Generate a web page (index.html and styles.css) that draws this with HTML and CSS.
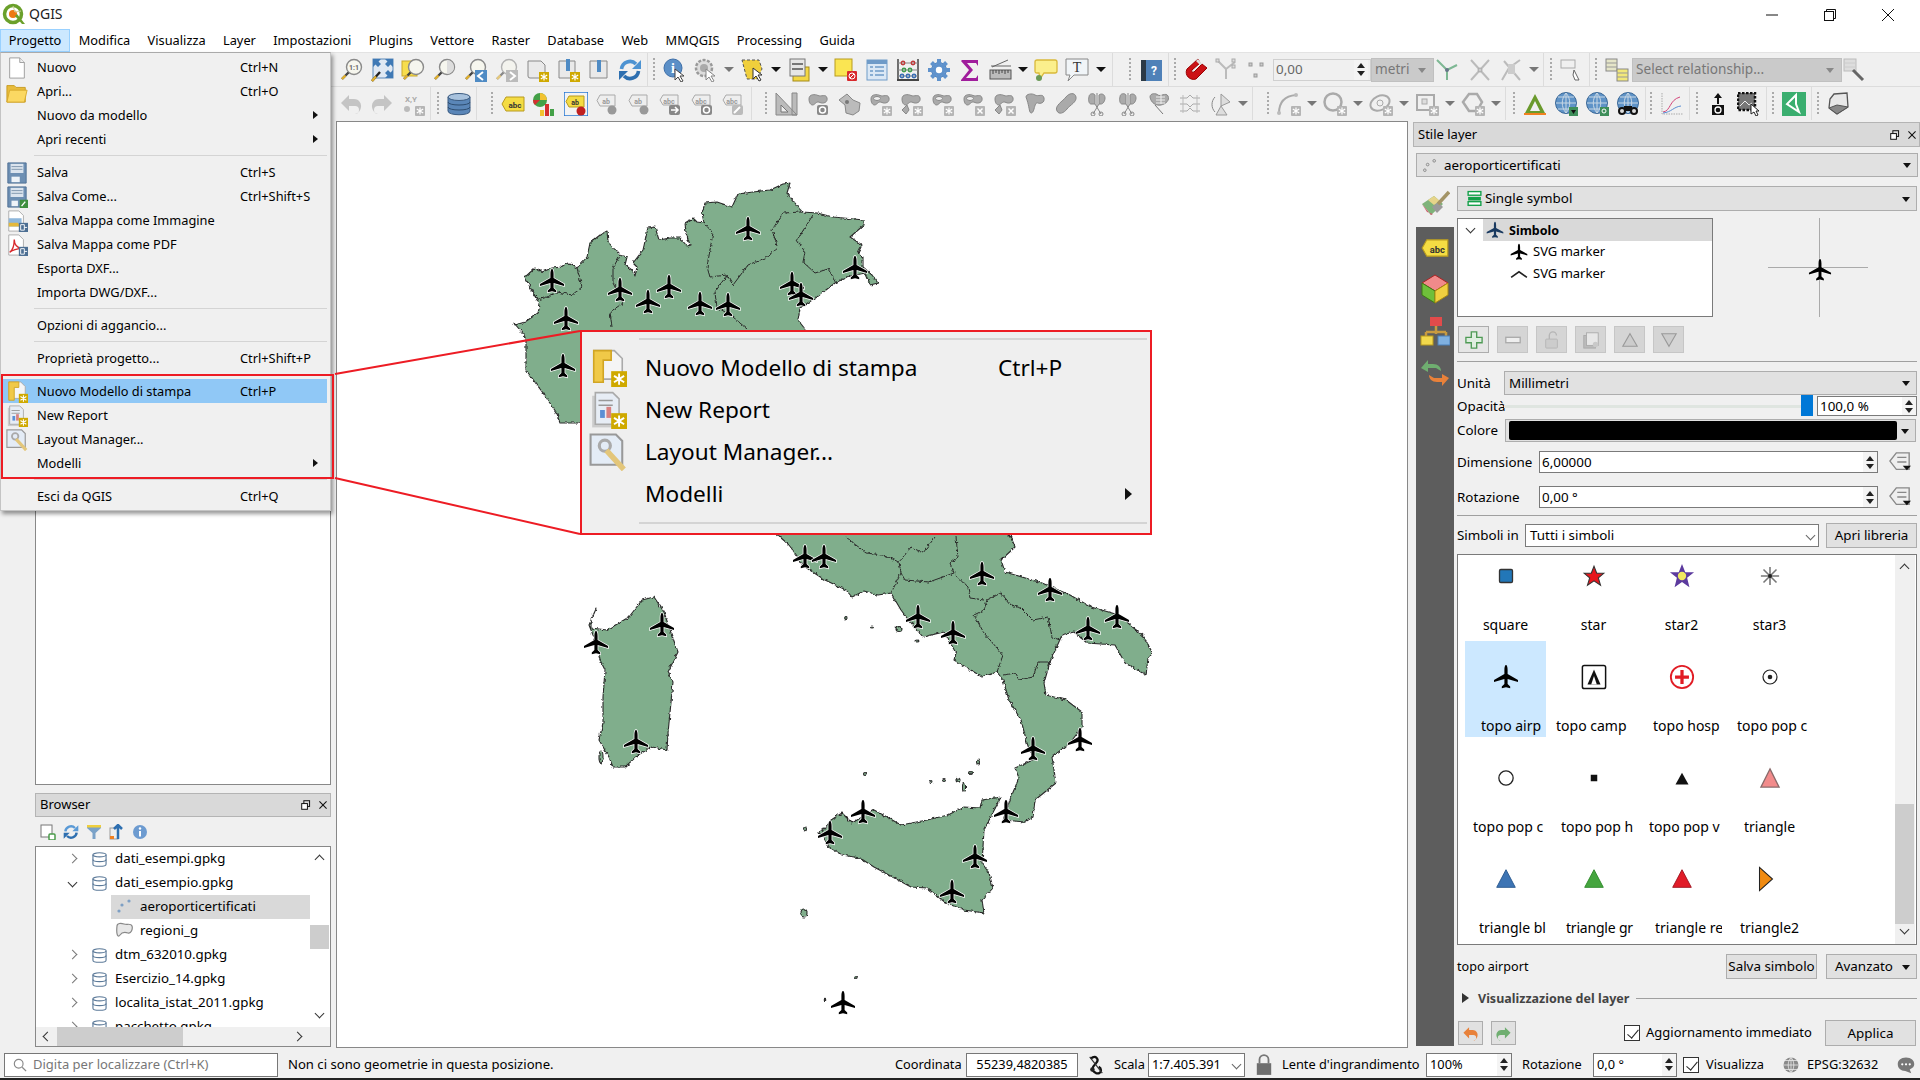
FILE: index.html
```html
<!DOCTYPE html>
<html lang="it">
<head>
<meta charset="utf-8">
<title>QGIS</title>
<link rel="stylesheet" href="styles.css">
</head>
<body>
<svg class="defs" width="0" height="0">
<defs>
<filter id="rough" filterUnits="userSpaceOnUse" x="336" y="121" width="1072" height="927"><feTurbulence type="fractalNoise" baseFrequency=".28" numOctaves="2" seed="4" result="n"/><feDisplacementMap in="SourceGraphic" in2="n" scale="3.600" xChannelSelector="R" yChannelSelector="G"/></filter>
<g id="mg"><circle cx="15" cy="9" r="7.5" fill="#f6f6ee" stroke="#8a8a8a" stroke-width="1.4"/><path d="M9.5 14.5 3 21" stroke="#444" stroke-width="2.4"/><path d="M6.5 17.5 3 21" stroke="#e0b030" stroke-width="2.4"/></g>
<g id="bs"><rect x="14" y="14" width="10" height="10" fill="#cfa900"/><path d="M19 15.5v7M15.8 17l6.4 4M15.8 21l6.4-4" stroke="#fff" stroke-width="1.2"/></g>
<g id="gs"><rect x="14" y="14" width="10" height="10" rx="1" fill="#b5b5b5"/><path d="M19 15.5v7M15.8 17l6.4 4M15.8 21l6.4-4" stroke="#fff" stroke-width="1.2"/></g>
<path id="blob" d="M3 7C3 2 9 2 12 3.5S20 1.500 21 6 17 12 14 10.500 10 11 8 12.500 3 12 3 7Z" fill="#aaa" stroke="#888"/>
<path id="plane" d="M0-12C1-12 1.600-10 1.600-7V-3L12 3V5L1.600 2V7L4.200 9.500V11.300L0 10.300-4.200 11.300V9.500L-1.600 7V2L-12 5V3L-1.600-3V-7C-1.600-10-1-12 0-12Z"/>
<symbol id="z11" viewBox="0 0 24 24"><use href="#mg"/><text x="15" y="12" class="it" fill="#666">1:1</text></symbol>
<symbol id="zfull" viewBox="0 0 24 24"><rect x="3" y="1" width="20" height="19" fill="#dfe8f3" stroke="#5b87b8"/><path d="M3 1h8L8.500 3.500 11 6 8 9 5.500 6.500 3 9ZM23 1h-8l2.500 2.500L15 6l3 3 2.500-2.500L23 9ZM23 20h-8l2.500-2.500L15 15l3-3 2.500 2.500L23 12Z" fill="#3f79b5"/><path d="M10 14 2 23" stroke="#222" stroke-width="2.400"/><path d="M6 18.500 2 23" stroke="#e0b030" stroke-width="2.400"/></symbol>
<symbol id="zlayer" viewBox="0 0 24 24"><rect x="1" y="3" width="15" height="15" fill="#f7dd4e" stroke="#c9a82a"/><use href="#mg"/></symbol>
<symbol id="zsel" viewBox="0 0 24 24"><use href="#mg"/><path d="M15 2a7 7 0 0 1 0 14z" fill="#ddd"/></symbol>
<symbol id="zlast" viewBox="0 0 24 24"><use href="#mg"/><rect x="12" y="12" width="12" height="12" fill="#4f8bc4"/><path d="M20 14l-5 4 5 4" fill="none" stroke="#fff" stroke-width="2"/></symbol>
<symbol id="znext" viewBox="0 0 24 24"><g opacity=".6"><use href="#mg"/></g><rect x="12" y="12" width="12" height="12" fill="#bbb"/><path d="M16 14l5 4-5 4" fill="none" stroke="#fff" stroke-width="2"/></symbol>
<symbol id="map1" viewBox="0 0 24 24"><path d="M3 3h13l4 4v13H5q-2 0-2-2Z" fill="#e9e9e9" stroke="#888"/><use href="#bs"/></symbol>
<symbol id="map2" viewBox="0 0 24 24"><path d="M3 3h16v17H3Z" fill="#e9e9e9" stroke="#888"/><rect x="10" y="1" width="4" height="12" fill="#4f8bc4"/><use href="#bs"/></symbol>
<symbol id="map3" viewBox="0 0 24 24"><path d="M3 3h17v17H3Z" fill="#e9e9e9" stroke="#888"/><rect x="10" y="2" width="4" height="12" fill="#4f8bc4"/></symbol>
<symbol id="refresh" viewBox="0 0 24 24"><path d="M3.500 11A8.500 8.500 0 0 1 18 6" fill="none" stroke="#4d93d2" stroke-width="3.600"/><path d="M23 2v9h-9Z" fill="#4d93d2"/><path d="M20.500 13A8.500 8.500 0 0 1 6 18" fill="none" stroke="#2d6fb0" stroke-width="3.600"/><path d="M1 22v-9h9Z" fill="#2d6fb0"/></symbol>
<symbol id="ident" viewBox="0 0 24 24"><circle cx="10" cy="10" r="9" fill="#5b8fc7" stroke="#3e6fa8"/><text x="10" y="15" class="ii" fill="#fff">i</text><path d="M12 11v11l3-3 3 5 2-1-3-5h4Z" fill="#fff" stroke="#444"/></symbol>
<symbol id="run" viewBox="0 0 24 24"><circle cx="10" cy="10" r="8" fill="#ddd" stroke="#999" stroke-width="2.500" stroke-dasharray="3 1.500"/><circle cx="10" cy="10" r="4" fill="#aaa"/><path d="M12 11v11l3-3 3 5 2-1-3-5h4Z" fill="#fff" stroke="#888"/></symbol>
<symbol id="sel" viewBox="0 0 24 24"><path d="M1 2h17l3 9-5 10H6Z" fill="#f0cf3c" stroke="#555" stroke-dasharray="3 2"/><path d="M12 10v11l3-3 3 5 2-1-3-5h4Z" fill="#fff" stroke="#333"/></symbol>
<symbol id="attr" viewBox="0 0 24 24"><rect x="5" y="9" width="16" height="14" fill="#f3d743" stroke="#a38a1a"/><rect x="2" y="1" width="15" height="17" fill="#e6e6e6" stroke="#777"/><path d="M4 6h11M4 11h11" stroke="#777" stroke-width="2"/></symbol>
<symbol id="desel" viewBox="0 0 24 24"><rect x="1" y="1" width="17" height="17" fill="#fae552" stroke="#b89b1e"/><rect x="13" y="13" width="10" height="10" rx="1" fill="#d8282c"/><circle cx="18" cy="18" r="3" fill="none" stroke="#fff"/><path d="M16 20l4-4" stroke="#fff"/></symbol>
<symbol id="table" viewBox="0 0 24 24"><rect x="2" y="2" width="20" height="20" fill="#dbe8f5" stroke="#6f9bc8"/><rect x="2" y="2" width="20" height="4" fill="#6f9bc8"/><path d="M5 9h3M10 9h9M5 13h3M10 13h9M5 17h3M10 17h9" stroke="#6f9bc8" stroke-width="1.500"/></symbol>
<symbol id="abacus" viewBox="0 0 24 24"><path d="M2 1v21M22 1v21" stroke="#444" stroke-width="1.500"/><path d="M1 22h22" stroke="#444" stroke-width="2"/><path d="M2 5h20M2 12h20M2 18h20" stroke="#888"/><g fill="none" stroke-width="1.500"><g stroke="#c03a3a"><circle cx="7" cy="5" r="1.700"/><circle cx="17" cy="5" r="1.700"/></g><g stroke="#3f9a4c"><circle cx="8" cy="12" r="1.700"/><circle cx="14" cy="12" r="1.700"/></g><g stroke="#3a6fb5"><circle cx="6" cy="18" r="1.700"/><circle cx="12" cy="18" r="1.700"/><circle cx="18" cy="18" r="1.700"/></g></g></symbol>
<symbol id="gear" viewBox="0 0 24 24"><circle cx="12" cy="12" r="7.500" fill="#6f9fd4" stroke="#4d7fb8"/><path d="M12 1v22M1 12h22M4.500 4.500l15 15M19.500 4.500l-15 15" stroke="#5f92cc" stroke-width="4"/><circle cx="12" cy="12" r="3.200" fill="#fff"/></symbol>
<symbol id="sigma" viewBox="0 0 24 24"><path d="M4 2h16v6l-2-3H9l6 7-7 8h10l2-3v6H3v-1l8-10L3 3Z" fill="#a01d9c"/></symbol>
<symbol id="rul" viewBox="0 0 24 24"><rect x="1" y="12" width="21" height="9" fill="#bbb" stroke="#555"/><path d="M4 12v4M7 12v3M10 12v4M13 12v3M16 12v4M19 12v3" stroke="#444"/><path d="M3 9l16-7M2 8h20" stroke="#666" fill="none"/></symbol>
<symbol id="tip" viewBox="0 0 24 24"><path d="M3 2h18q2 0 2 2v9q0 2-2 2H10l-4 6-1-6H3q-2 0-2-2V4q0-2 2-2Z" fill="#fbef8c" stroke="#d9b93a" stroke-width="1.300"/><circle cx="5" cy="20" r="3" fill="#6b9a58"/></symbol>
<symbol id="tann" viewBox="0 0 24 24"><path d="M1 1h22v16H9l-6 6 2-6H1Z" fill="#f1f5f8" stroke="#888"/><text x="12" y="14" class="iT" fill="#333">T</text></symbol>
<symbol id="help" viewBox="0 0 24 24"><rect x="2" y="2" width="21" height="21" fill="#4f81b8"/><rect x="2" y="2" width="5" height="21" fill="#2c3a47"/><text x="15" y="17" class="iq" fill="#fff">?</text></symbol>
<symbol id="magnet" viewBox="0 0 24 24"><path d="M14 1 3 11c-3 6 3 12 9 10L23 10l-5-4-8 8c-2 1-3-1-2-2l8-7Z" fill="#cc1216" stroke="#900"/><path d="M14 1l4 5 -2 1-4-4ZM23 10l-5-4" fill="#ddd"/></symbol>
<symbol id="topo" viewBox="0 0 24 24"><path d="M3 3l8 8v10M11 11l9-7" stroke="#bbb" stroke-width="2" fill="none"/><g fill="#ddd" stroke="#aaa"><rect x="1" y="1" width="3" height="3"/><rect x="17" y="1" width="3" height="3"/><rect x="17" y="7" width="3" height="3"/></g></symbol>
<symbol id="dots" viewBox="0 0 24 24"><g fill="#ccc" stroke="#999"><rect x="3" y="5" width="3" height="3"/><rect x="14" y="5" width="3" height="3"/><rect x="8" y="16" width="3" height="3"/></g></symbol>
<symbol id="vtx" viewBox="0 0 24 24"><path d="M2 2l10 10v10M12 12l10-5" stroke="#7eb894" stroke-width="2" fill="none"/><circle cx="12" cy="12" r="2" fill="#678"/></symbol>
<symbol id="cross" viewBox="0 0 24 24"><path d="M3 2l18 20M21 2 3 22" stroke="#bbb" stroke-width="2"/><circle cx="12" cy="12" r="2" fill="#ccc" stroke="#aaa"/></symbol>
<symbol id="cross2" viewBox="0 0 24 24"><path d="M3 22 10 10l11-8M5 3l16 19" stroke="#bbb" stroke-width="2" fill="none"/><path d="M9 6h7v10H9Z" fill="#ccc"/></symbol>
<symbol id="hand" viewBox="0 0 24 24"><rect x="1" y="2" width="14" height="8" fill="none" stroke="#aaa"/><path d="M14 12l3 6 2 4h-4l-2-5Z" fill="#fff" stroke="#666"/></symbol>
<symbol id="rel" viewBox="0 0 24 24"><rect x="1" y="1" width="11" height="12" fill="#e5e5c8" stroke="#888"/><path d="M1 5h11M1 9h11" stroke="#999"/><rect x="12" y="11" width="11" height="12" fill="#f2e87a" stroke="#888"/><path d="M12 15h11M12 19h11" stroke="#999"/></symbol>
<symbol id="relw" viewBox="0 0 24 24"><rect x="1" y="1" width="12" height="12" fill="#ddd" stroke="#bbb"/><path d="M1 5h12M1 9h12" stroke="#ccc"/><path d="M10 12l10 10" stroke="#666" stroke-width="3"/></symbol>
<symbol id="undo" viewBox="0 0 24 24"><path d="M10 3 2 11l8 8v-5h6a4 4 0 0 1 0 8v0a8 8 0 0 0 3-14q-2-1-4-1h-5Z" fill="#c4c4c4"/></symbol>
<symbol id="redo" viewBox="0 0 24 24"><path d="M14 3l8 8-8 8v-5H8a4 4 0 0 0 0 8v0A8 8 0 0 1 5 8q2-1 4-1h5Z" fill="#c4c4c4"/></symbol>
<symbol id="xy" viewBox="0 0 24 24"><text x="10" y="10" class="ix" fill="#aaa">X,Y</text><circle cx="6" cy="17" r="3" fill="#bbb"/><use href="#gs"/></symbol>
<symbol id="db" viewBox="0 0 24 24"><path d="M1 5v14c0 5 22 5 22 0V5Z" fill="#5a86b8" stroke="#3a5a80"/><ellipse cx="12" cy="5" rx="11" ry="3.500" fill="#a8c2dd" stroke="#3a5a80"/><path d="M1 10c0 4 22 4 22 0M1 15c0 4 22 4 22 0" fill="none" stroke="#2e4d70"/></symbol>
<symbol id="abc" viewBox="0 0 24 24"><path d="M5 5h18v14H5L1 12Z" fill="#f4dc43" stroke="#b89a1f"/><text x="14" y="16" class="ia" fill="#333">abc</text></symbol>
<symbol id="pie" viewBox="0 0 24 24"><circle cx="8" cy="8" r="7" fill="#43a047"/><path d="M8 8V1a7 7 0 0 1 7 7Z" fill="#f2c230"/><path d="M8 8 3 13a7 7 0 0 1-2-5Z" fill="#d32f2f"/><rect x="8" y="18" width="4" height="6" fill="#f2c230"/><rect x="13" y="12" width="4" height="12" fill="#d32f2f"/><rect x="18" y="17" width="4" height="7" fill="#43a047"/></symbol>
<symbol id="abp" viewBox="0 0 24 24"><rect x="0" y="0" width="24" height="24" fill="#fff" fill-opacity=".2" stroke="#1c6fd0" stroke-width="1.400"/><path d="M5 4h15v11H5L2 9.500Z" fill="#f4dc43" stroke="#b89a1f"/><text x="11" y="13" class="ib" fill="#333">ab</text><circle cx="17" cy="19" r="4.500" fill="#c02020"/></symbol>
<symbol id="abg" viewBox="0 0 24 24"><path d="M5 3h15v11H5L2 8.500Z" fill="#eee" stroke="#aaa"/><text x="11" y="12" class="ib" fill="#999">ab</text><circle cx="17" cy="18" r="4.500" fill="#999"/></symbol>
<symbol id="abe" viewBox="0 0 24 24"><path d="M5 3h15v10H5L2 8Z" fill="#eee" stroke="#aaa"/><text x="11" y="11.500" class="ib" fill="#999">abc</text><rect x="11" y="13" width="11" height="10" rx="2" fill="#888"/><path d="M13 18h7M17 15l3 3-3 3" stroke="#fff" fill="none" stroke-width="1.500"/></symbol>
<symbol id="abr" viewBox="0 0 24 24"><path d="M5 3h15v10H5L2 8Z" fill="#eee" stroke="#aaa"/><text x="11" y="11.500" class="ib" fill="#999">abc</text><rect x="11" y="13" width="11" height="10" rx="2" fill="#888"/><circle cx="16.500" cy="18" r="3" fill="none" stroke="#fff" stroke-width="1.500"/></symbol>
<symbol id="abw" viewBox="0 0 24 24"><path d="M5 3h15v10H5L2 8Z" fill="#eee" stroke="#aaa"/><text x="11" y="11.500" class="ib" fill="#999">abc</text><rect x="11" y="13" width="11" height="10" rx="2" fill="#bbb"/><path d="M13 21l6-6" stroke="#fff" stroke-width="2"/></symbol>
<symbol id="sq" viewBox="0 0 24 24"><path d="M1 1 22 23H1ZM22 1v22h-5V1Z" fill="#bbb" stroke="#888"/><path d="M6 13l7 7H6Z" fill="#eee" stroke="#777"/></symbol>
<symbol id="bl1" viewBox="0 0 24 24"><use href="#blob"/><rect x="11" y="13" width="11" height="10" rx="2" fill="#888"/><circle cx="16.500" cy="18" r="3" fill="none" stroke="#fff" stroke-width="1.500"/></symbol>
<symbol id="bl2" viewBox="0 0 24 24"><path d="M2 8 10 2l6 6 7 3-1 8-6 4-7-2-1-8Z" fill="#bbb" stroke="#888"/><circle cx="10" cy="10" r="2" fill="#777"/></symbol>
<symbol id="bl3" viewBox="0 0 24 24"><use href="#blob"/><ellipse cx="9" cy="6.500" rx="3.500" ry="2" fill="#eee" stroke="#888"/><use href="#gs"/></symbol>
<symbol id="bl4" viewBox="0 0 24 24"><use href="#blob"/><path d="M3 18l5-5 2 5-3 4Z" fill="#aaa" stroke="#888"/><use href="#gs"/></symbol>
<symbol id="bl5" viewBox="0 0 24 24"><use href="#blob"/><ellipse cx="9" cy="6.500" rx="3.500" ry="2" fill="#eee" stroke="#888"/><rect x="14" y="14" width="10" height="10" rx="1" fill="#b5b5b5"/><path d="M16.500 16.500l5 5M21.500 16.500l-5 5" stroke="#fff" stroke-width="1.500"/></symbol>
<symbol id="bl6" viewBox="0 0 24 24"><use href="#blob"/><path d="M3 18l5-5 2 5-3 4Z" fill="#aaa" stroke="#888"/><rect x="14" y="14" width="10" height="10" rx="1" fill="#b5b5b5"/><path d="M16.500 16.500l5 5M21.500 16.500l-5 5" stroke="#fff" stroke-width="1.500"/></symbol>
<symbol id="bl7" viewBox="0 0 24 24"><path d="M3 5C3 2 9 1 12 3s8-2 9 3-4 6-6 5-3 2-4 6-3 5-4 3-1-7-4-15Z" fill="#aaa" stroke="#888"/></symbol>
<symbol id="bl8" viewBox="0 0 24 24"><path d="M3 19C0 14 9 9 12 5s9-5 10 0-6 8-9 12-8 6-10 2Z" fill="#aaa" stroke="#888"/></symbol>
<symbol id="cut" viewBox="0 0 24 24"><path d="M4 5C4 1 9 1 10 3V12H6C4 12 3 8 4 5ZM14 3c2-2 6-1 6 3 0 3-2 6-4 6h-2Z" fill="#aaa" stroke="#888"/><path d="M12 1v13M8 22l6-10M16 22l-6-10" stroke="#888"/><circle cx="8" cy="22" r="2" fill="none" stroke="#888"/><circle cx="16" cy="22" r="2" fill="none" stroke="#888"/></symbol>
<symbol id="cut2" viewBox="0 0 24 24"><path d="M3 5c0-4 6-4 8-2s8-3 10 1-2 8-7 9-10-2-11-8Z" fill="#aaa" stroke="#888"/><path d="M14 2v10M9 5h9M9 8h9M9 11h9" stroke="#eee"/><path d="M8 13 16 22" stroke="#777"/></symbol>
<symbol id="offs" viewBox="0 0 24 24"><path d="M2 6h7l3-3 3 3h7M2 12h7l3 3 3-3h7M2 19h7l3-3 3 3h7" fill="none" stroke="#aaa"/><path d="M5 3v18M19 3v18" stroke="#bbb"/></symbol>
<symbol id="rot" viewBox="0 0 24 24"><path d="M6 5C2 9 2 16 6 20" fill="none" stroke="#888"/><path d="M12 2 21 10 12 14ZM12 14l6 9H7Z" fill="#ddd" stroke="#999"/></symbol>
<symbol id="crv" viewBox="0 0 24 24"><path d="M2 21C2 10 8 4 19 3" fill="none" stroke="#aaa" stroke-width="2"/><circle cx="2" cy="21" r="2" fill="#bbb"/><circle cx="19" cy="3" r="2" fill="#bbb"/><use href="#gs"/></symbol>
<symbol id="crc" viewBox="0 0 24 24"><circle cx="10" cy="10" r="8.500" fill="none" stroke="#aaa" stroke-width="2.500"/><use href="#gs"/></symbol>
<symbol id="ell" viewBox="0 0 24 24"><ellipse cx="11" cy="11" rx="10" ry="7" fill="none" stroke="#aaa" stroke-width="2" transform="rotate(-25 11 11)"/><circle cx="11" cy="11" r="3" fill="none" stroke="#aaa"/><use href="#gs"/></symbol>
<symbol id="rct" viewBox="0 0 24 24"><rect x="2" y="3" width="17" height="15" fill="none" stroke="#aaa" stroke-width="2"/><rect x="7" y="7" width="5" height="5" fill="#ddd" stroke="#aaa"/><use href="#gs"/></symbol>
<symbol id="pgn" viewBox="0 0 24 24"><path d="M8 2h8l5 8-5 9H8L2 10Z" fill="none" stroke="#aaa" stroke-width="2.500"/><use href="#gs"/></symbol>
<symbol id="qgsa" viewBox="0 0 24 24"><path d="M12 2 22 21H2ZM12 9 7 19h10Z" fill="#6a9a2c"/><rect x="1" y="21" width="22" height="2" fill="#f08020"/></symbol>
<symbol id="glb" viewBox="0 0 24 24"><circle cx="12" cy="11" r="10.500" fill="#5f93c7" stroke="#3a6897"/><path d="M12 1v20M2 11h20M4 5h16M4 17h16M12 1C7 7 7 15 12 21M12 1c5 6 5 14 0 20" fill="none" stroke="#c9d8e5"/></symbol>
<symbol id="glb1" viewBox="0 0 24 24"><use href="#glb"/><rect x="15" y="15" width="9" height="9" fill="#3e8e5a"/><path d="M17 18h5l-2.500 4Z" fill="#111"/></symbol>
<symbol id="glb2" viewBox="0 0 24 24"><use href="#glb"/><rect x="15" y="15" width="9" height="9" fill="#3e8e5a"/><circle cx="19" cy="19" r="2" fill="none" stroke="#fff"/></symbol>
<symbol id="glb3" viewBox="0 0 24 24"><use href="#glb"/><circle cx="6" cy="19" r="4" fill="#111"/><circle cx="18" cy="19" r="4" fill="#111"/><rect x="8" y="14" width="8" height="5" fill="#111"/><circle cx="6" cy="19" r="2" fill="#ddd"/><circle cx="18" cy="19" r="2" fill="#ddd"/></symbol>
<symbol id="chart" viewBox="0 0 24 24"><path d="M2 1v21h21" fill="none" stroke="#aaa" stroke-dasharray="1.500 1"/><path d="M3 20c8-1 6-12 17-15" fill="none" stroke="#d4457a"/><path d="M3 21c9-1 10-6 18-7" fill="none" stroke="#5b8fd4"/></symbol>
<symbol id="cam" viewBox="0 0 24 24"><path d="M12 1l-4 5h3v6h2V6h3Z" fill="#111"/><rect x="6" y="13" width="12" height="10" fill="#111"/><circle cx="12" cy="18" r="3" fill="none" stroke="#fff" stroke-width="1.300"/></symbol>
<symbol id="pic" viewBox="0 0 24 24"><rect x="1" y="1" width="17" height="17" fill="#777" stroke="#111" stroke-width="2.500" stroke-dasharray="2.500 1.500"/><path d="M3 14l5-5 4 4 3-2" stroke="#eee" fill="none"/><path d="M14 12v10l3-2 2 4 2-1-2-4h3Z" fill="#fff" stroke="#222"/></symbol>
<symbol id="grn" viewBox="0 0 24 24"><rect width="24" height="24" fill="#3aae6f"/><path d="M14 3 5 12l12 8-3-8Z" fill="none" stroke="#fff" stroke-width="2"/></symbol>
<symbol id="d3" viewBox="0 0 24 24"><path d="M7 2l13-1 1 14-11 7L2 16l1-9Z" fill="#e8e8e8" stroke="#555" stroke-width="1.300"/><path d="M2 16l8-3 11 2-11 7Z" fill="#888" stroke="#555"/></symbol>
<symbol id="m-new" viewBox="0 0 24 24"><path d="M4 1h11l5 5v17H4Z" fill="#fff" stroke="#999"/><path d="M15 1v5h5" fill="#eee" stroke="#999"/></symbol>
<symbol id="m-open" viewBox="0 0 24 24"><path d="M1 5h8l2 2h10v16H1Z" fill="#e8bc3c" stroke="#c79a20"/><path d="M1 23 4 10h19l-3 13Z" fill="#fbd862" stroke="#d6a92c"/></symbol>
<symbol id="m-save" viewBox="0 0 24 24"><path d="M2 1h20v22H2Z" fill="#6d8fb3" stroke="#4d6f93"/><rect x="5" y="2" width="14" height="10" fill="#dbe4ee"/><path d="M6 5h12M6 8h12" stroke="#7c93ab"/><rect x="6" y="16" width="9" height="6" fill="#eef3f8"/></symbol>
<symbol id="m-saveas" viewBox="0 0 24 24"><path d="M2 1h20v22H2Z" fill="#6d8fb3" stroke="#4d6f93"/><rect x="5" y="2" width="14" height="10" fill="#dbe4ee"/><path d="M6 5h12M6 8h12" stroke="#7c93ab"/><rect x="6" y="16" width="7" height="6" fill="#eef3f8"/><rect x="15" y="15" width="9" height="9" fill="#3f8f3f"/><path d="M17 22l4-5" stroke="#fff" stroke-width="1.500"/></symbol>
<symbol id="m-img" viewBox="0 0 24 24"><path d="M3 1h11l5 5v17H3Z" fill="#fff" stroke="#aaa"/><rect x="3" y="9" width="14" height="9" fill="#8eb7db"/><path d="M3 14h10l3 4H3Z" fill="#e4b93c"/><rect x="14" y="14" width="10" height="10" fill="#4d6f93"/><path d="M16 16h4v6h-4ZM20 19h3" stroke="#fff" fill="none"/></symbol>
<symbol id="m-pdf" viewBox="0 0 24 24"><path d="M3 1h11l5 5v17H3Z" fill="#fff" stroke="#aaa"/><path d="M4 20C8 17 9 10 9 6c0 6 4 9 8 10-4 0-8 0-13 4Z" fill="none" stroke="#d8282c" stroke-width="1.500"/><rect x="14" y="14" width="10" height="10" fill="#4d6f93"/><path d="M16 16h4v6h-4ZM20 19h3" stroke="#fff" fill="none"/></symbol>
<symbol id="m-lay" viewBox="0 0 24 24"><path d="M3 1h13l5 5v13H3Z" fill="#f5f5f5" stroke="#aaa"/><path d="M3 1h11v6H9v14H3Z" fill="#f0c948" stroke="#d1a524"/><use href="#bs"/></symbol>
<symbol id="m-rep" viewBox="0 0 24 24"><rect x="2" y="3" width="16" height="20" fill="#ccc"/><path d="M4 1h11l4 4v16H4Z" fill="#e7edf5" stroke="#aaa"/><path d="M6 6h9M6 9h9" stroke="#999"/><rect x="7" y="12" width="3" height="5" fill="#5b8fd4"/><rect x="11" y="10" width="3" height="7" fill="#d98080"/><use href="#bs"/></symbol>
<symbol id="m-mgr" viewBox="0 0 24 24"><path d="M1 1h16l4 4v15H1Z" fill="#e4ecf6" stroke="#999" stroke-width="1.300"/><circle cx="10" cy="8" r="3.500" fill="none" stroke="#aaa" stroke-width="2"/><path d="M11 11l11 12" stroke="#e3c67a" stroke-width="3.500"/></symbol>
<symbol id="r-db" viewBox="0 0 16 16"><path d="M1 3v10c0 3 14 3 14 0V3" fill="#fff" stroke="#5c7a99" stroke-width="1.200"/><ellipse cx="8" cy="3" rx="7" ry="2.200" fill="#fff" stroke="#5c7a99" stroke-width="1.200"/><path d="M1 8c0 3 14 3 14 0" fill="none" stroke="#5c7a99" stroke-width="1.200"/></symbol>
<symbol id="r-pts" viewBox="0 0 16 16"><g fill="#7d9fc4"><circle cx="3" cy="13" r="1.600"/><circle cx="6" cy="7" r="1.600"/><circle cx="13" cy="3" r="1.600"/></g></symbol>
<symbol id="r-pts2" viewBox="0 0 16 16"><g fill="none" stroke="#888"><circle cx="3" cy="13" r="1.400"/><circle cx="6" cy="7" r="1.400"/><circle cx="13" cy="3" r="1.400"/></g></symbol>
<symbol id="r-pg" viewBox="0 0 18 16"><path d="M2 4C2 1 6 1 9 2s7-1 8 2-1 8-4 7-6-1-8 2-4 0-3-9Z" fill="#e7e7e7" stroke="#888" stroke-width="1.200"/></symbol>
<symbol id="b-new" viewBox="0 0 16 16"><rect x="1" y="1" width="11" height="12" fill="#fff" stroke="#777"/><rect x="9" y="10" width="6" height="6" rx="1" fill="#fff" stroke="#4a9b4a" stroke-width="1.500"/></symbol>
<symbol id="b-ref" viewBox="0 0 24 24"><path d="M3.500 11A8.500 8.500 0 0 1 18 6" fill="none" stroke="#5a9ad6" stroke-width="3.600"/><path d="M23 2v9h-9Z" fill="#5a9ad6"/><path d="M20.500 13A8.500 8.500 0 0 1 6 18" fill="none" stroke="#2d6fb0" stroke-width="3.600"/><path d="M1 22v-9h9Z" fill="#2d6fb0"/></symbol>
<symbol id="b-fil" viewBox="0 0 16 16"><path d="M1 1h14v3L9.500 9v6H6.500V9L1 4Z" fill="#7aa2c8"/><rect x="1" y="1" width="14" height="2.500" fill="#f0cf3c"/></symbol>
<symbol id="b-col" viewBox="0 0 16 16"><rect x="1" y="4" width="8" height="11" fill="#eee" stroke="#999"/><rect x="1" y="12" width="4" height="3" fill="#f08020"/><path d="M9 1v14M5 5l4-4 4 4" stroke="#2d6fb0" stroke-width="2.500" fill="none"/></symbol>
<symbol id="b-inf" viewBox="0 0 16 16"><circle cx="8" cy="8" r="7" fill="#6d9bd0"/><rect x="7" y="7" width="2" height="5.500" fill="#fff"/><circle cx="8" cy="4.500" r="1.200" fill="#fff"/></symbol>
<symbol id="lgo" viewBox="0 0 24 24"><circle cx="11" cy="11" r="8.500" fill="#fff" stroke="#6aa02b" stroke-width="3.500"/><circle cx="11" cy="11" r="4" fill="#ee7913"/><path d="M13 13l7 8h3l-8-10Z" fill="#6aa02b"/><path d="M11 3l2 6 6-1" fill="none" stroke="#d0d0a0"/></symbol>
<symbol id="dtop" viewBox="0 0 14 14"><rect x="4" y="1" width="8" height="8" fill="none" stroke="#111" stroke-width="1.400"/><rect x="1" y="5" width="8" height="8" fill="#fff" stroke="#111" stroke-width="1.400"/></symbol>
<symbol id="dx" viewBox="0 0 14 14"><path d="M2 2l10 10M12 2 2 12" stroke="#111" stroke-width="1.500"/></symbol>
<symbol id="ddef" viewBox="0 0 24 24"><path d="M8 2h14v18H8L1 11Z" fill="#eee" stroke="#888" stroke-width="1.500"/><path d="M9 7h10M9 12h10" stroke="#888" stroke-width="1.500"/><path d="M15 16h9l-4.500 5Z" fill="#111"/></symbol>
<symbol id="brush" viewBox="0 0 30 30"><path d="M2 14 14 6l9 8-12 11Z" fill="#7fb37a"/><path d="M2 14l5 8 6 2-2 1Z" fill="#cc5a6a"/><path d="M8 10l6-4 6 5-6 4Z" fill="#e6d48a"/><path d="M12 17 18 12l5 5-6 6Z" fill="#9a9a9a"/><path d="M18 14 29 2" stroke="#a39467" stroke-width="3.500"/></symbol>
<symbol id="cube" viewBox="0 0 30 30"><path d="M15 1 28 9 15 17 2 9Z" fill="#f08a8a" stroke="#a22"/><path d="M2 9 15 17V29L2 21Z" fill="#6fbf3a" stroke="#3d7a15"/><path d="M28 9 15 17V29L28 21Z" fill="#f0d040" stroke="#a88a10"/></symbol>
<symbol id="tree" viewBox="0 0 30 30"><rect x="10" y="1" width="12" height="9" fill="#e24b4b"/><path d="M16 10v8M6 16h20M6 16v4M26 16v4" stroke="#c89a40" stroke-width="2.500" fill="none"/><rect x="1" y="20" width="12" height="9" fill="#f2d84c" stroke="#b89a1f"/><rect x="18" y="20" width="12" height="9" fill="#7fb0e0" stroke="#4a7eb8"/></symbol>
<symbol id="hist" viewBox="0 0 30 30"><path d="M1 10 8 2v4h5c5 0 8 3 8 7l-5-3H8v4Z" fill="#6fae70"/><path d="M29 20 22 28v-4h-5c-5 0-8-3-8-7l5 3h8v-4Z" fill="#e8813a"/></symbol>
<symbol id="rr" viewBox="0 0 16 16"><rect x="2" y="1.500" width="12" height="3.400" fill="#fff" stroke="#14a04a" stroke-width="1.300"/><rect x="2" y="6.500" width="12" height="3.400" fill="#14a04a"/><rect x="2" y="11" width="12" height="3.400" fill="#fff" stroke="#14a04a" stroke-width="1.300"/></symbol>
<symbol id="plus" viewBox="0 0 20 20"><path d="M7 1h6v6h6v6h-6v6H7v-6H1V7h6Z" fill="#dfeee0" stroke="#4f9a55" stroke-width="1.500"/></symbol>
<symbol id="minus" viewBox="0 0 20 20"><rect x="2" y="7" width="16" height="6" fill="#eee" stroke="#aaa" stroke-width="1.500"/></symbol>
<symbol id="lock" viewBox="0 0 20 20"><rect x="3" y="9" width="13" height="10" rx="1" fill="#ccc" stroke="#b5b5b5"/><path d="M7 9V5a4 4 0 0 1 8 0" fill="none" stroke="#b5b5b5" stroke-width="1.500"/></symbol>
<symbol id="dup" viewBox="0 0 20 20"><rect x="2" y="5" width="13" height="14" fill="#bbb" stroke="#aaa"/><rect x="5" y="2" width="13" height="14" fill="#e7e7e7" stroke="#aaa"/><circle cx="15" cy="15" r="3" fill="#c9c9c9"/></symbol>
<symbol id="tup" viewBox="0 0 20 20"><path d="M10 3 18 17H2Z" fill="#ccc" stroke="#999" stroke-width="1.200"/></symbol>
<symbol id="tdn" viewBox="0 0 20 20"><path d="M10 17 18 3H2Z" fill="#ccc" stroke="#999" stroke-width="1.200"/></symbol>
<symbol id="s-undo" viewBox="0 0 24 24"><path d="M10 3 2 11l8 8v-5h6a4 4 0 0 1 0 8v0a8 8 0 0 0 3-14q-2-1-4-1h-5Z" fill="#e8813a"/></symbol>
<symbol id="s-redo" viewBox="0 0 24 24"><path d="M14 3l8 8-8 8v-5H8a4 4 0 0 0 0 8v0A8 8 0 0 1 5 8q2-1 4-1h5Z" fill="#6fae70"/></symbol>
<symbol id="air" viewBox="-13 -13 26 26"><use href="#plane"/></symbol>
<symbol id="srch" viewBox="0 0 16 16"><circle cx="6.500" cy="6.500" r="5" fill="none" stroke="#888" stroke-width="1.300"/><path d="M10.500 10.500l4.500 4.500" stroke="#888" stroke-width="1.500"/></symbol>
<symbol id="padl" viewBox="0 0 20 24"><path d="M5 10V6a5 5 0 0 1 10 0v4" fill="none" stroke="#777" stroke-width="2"/><rect x="2" y="10" width="16" height="13" fill="#6e6e6e"/></symbol>
<symbol id="nocrs" viewBox="0 0 20 24"><path d="M4 5 C10 0 14 6 10 10 6 14 4 18 10 21 16 23 17 16 13 14" fill="none" stroke="#111" stroke-width="2.500"/><path d="M3 3 17 21" stroke="#333" stroke-width="1.300"/><circle cx="6" cy="17" r="2.500" fill="#222"/></symbol>
<symbol id="crs" viewBox="0 0 24 24"><circle cx="12" cy="12" r="10" fill="#8a8a8a"/><path d="M12 2v20M2 12h20M4 6h16M4 18h16M12 2C7 7 7 17 12 22M12 2c5 5 5 15 0 20" fill="none" stroke="#eee"/></symbol>
<symbol id="msg" viewBox="0 0 24 24"><path d="M12 2C5 2 1 6 1 11s4 9 10 9l8 3-2-5c4-2 6-4 6-7 0-5-4-9-11-9Z" fill="#777"/><circle cx="7" cy="11" r="1.500" fill="#fff"/><circle cx="12" cy="11" r="1.500" fill="#fff"/><circle cx="17" cy="11" r="1.500" fill="#fff"/></symbol>
</defs>
</svg>

<div class="app">
  <header class="titlebar">
    <svg class="ti-logo"><use href="#lgo"/></svg>
    <span class="ti-name">QGIS</span>
    <div class="ti-win">
      <svg class="wb" viewBox="0 0 12 12"><path d="M0 6h12" stroke="#111"/></svg>
      <svg class="wb" viewBox="0 0 12 12"><rect x=".5" y="2.500" width="9" height="9" fill="#fff" stroke="#111"/><path d="M2.500 2.500V.5h9v9h-2" fill="none" stroke="#111"/></svg>
      <svg class="wb" viewBox="0 0 12 12"><path d="M0 0l12 12M12 0 0 12" stroke="#111"/></svg>
    </div>
  </header>

  <nav class="menubar">
    <span class="mb on">Progetto</span><span class="mb">Modifica</span><span class="mb">Visualizza</span><span class="mb">Layer</span><span class="mb">Impostazioni</span><span class="mb">Plugins</span><span class="mb">Vettore</span><span class="mb">Raster</span><span class="mb">Database</span><span class="mb">Web</span><span class="mb">MMQGIS</span><span class="mb">Processing</span><span class="mb">Guida</span>
  </nav>

  <section class="tools">
    <div class="trow r1">
      <span class="b"><svg><use href="#z11"/></svg></span><span class="b"><svg><use href="#zfull"/></svg></span><span class="b"><svg><use href="#zlayer"/></svg></span><span class="b"><svg><use href="#zsel"/></svg></span><span class="b"><svg><use href="#zlast"/></svg></span><span class="b"><svg><use href="#znext"/></svg></span><span class="b"><svg><use href="#map1"/></svg></span><span class="b"><svg><use href="#map2"/></svg></span><span class="b"><svg><use href="#map3"/></svg></span><span class="b"><svg><use href="#refresh"/></svg></span>
      <span class="g g14"></span>
      <span class="b"><svg><use href="#ident"/></svg></span><span class="b"><svg><use href="#run"/></svg></span><span class="a a16 dim"></span><span class="b"><svg><use href="#sel"/></svg></span><span class="a a16"></span><span class="b"><svg><use href="#attr"/></svg></span><span class="a a15"></span><span class="b"><svg><use href="#desel"/></svg></span><span class="b"><svg><use href="#table"/></svg></span><span class="b"><svg><use href="#abacus"/></svg></span><span class="b"><svg><use href="#gear"/></svg></span><span class="b"><svg><use href="#sigma"/></svg></span><span class="b"><svg><use href="#rul"/></svg></span><span class="a a14"></span><span class="b"><svg><use href="#tip"/></svg></span><span class="b"><svg><use href="#tann"/></svg></span><span class="a a18"></span>
      <span class="g g25"></span>
      <span class="b"><svg><use href="#help"/></svg></span>
      <span class="g g14"></span>
      <span class="b"><svg><use href="#magnet"/></svg></span><span class="b"><svg><use href="#topo"/></svg></span><span class="b"><svg><use href="#dots"/></svg></span>
      <span class="tinput">0,00<i class="sp"><i class="up"></i><i class="dn"></i></i></span>
      <span class="tsel w63">metri<i class="mini"></i></span>
      <span class="b b26"><svg><use href="#vtx"/></svg></span><span class="b bs4"><svg><use href="#cross"/></svg></span><span class="b"><svg><use href="#cross2"/></svg></span><span class="a a15 dim"></span>
      <span class="g g15"></span>
      <span class="b"><svg><use href="#hand"/></svg></span>
      <span class="g g14"></span>
      <span class="b"><svg><use href="#rel"/></svg></span>
      <span class="tsel w210">Select relationship...<i class="mini"></i></span>
      <span class="b b26"><svg><use href="#relw"/></svg></span>
    </div>
    <div class="trow r2">
      <span class="b"><svg><use href="#undo"/></svg></span><span class="b"><svg><use href="#redo"/></svg></span><span class="b"><svg><use href="#xy"/></svg></span>
      <span class="g g15"></span>
      <span class="b"><svg><use href="#db"/></svg></span>
      <span class="g g23"></span>
      <span class="b bw"><svg><use href="#abc"/></svg></span><span class="b bw"><svg><use href="#pie"/></svg></span><span class="b bw"><svg><use href="#abp"/></svg></span><span class="b bw"><svg><use href="#abg"/></svg></span><span class="b bw"><svg><use href="#abg"/></svg></span><span class="b bw"><svg><use href="#abe"/></svg></span><span class="b bw"><svg><use href="#abr"/></svg></span><span class="b bw"><svg><use href="#abw"/></svg></span>
      <span class="g g22"></span>
      <span class="b"><svg><use href="#sq"/></svg></span><span class="b"><svg><use href="#bl1"/></svg></span><span class="b"><svg><use href="#bl2"/></svg></span><span class="b"><svg><use href="#bl3"/></svg></span><span class="b"><svg><use href="#bl4"/></svg></span><span class="b"><svg><use href="#bl3"/></svg></span><span class="b"><svg><use href="#bl5"/></svg></span><span class="b"><svg><use href="#bl6"/></svg></span><span class="b"><svg><use href="#bl7"/></svg></span><span class="b"><svg><use href="#bl8"/></svg></span><span class="b"><svg><use href="#cut"/></svg></span><span class="b"><svg><use href="#cut"/></svg></span><span class="b"><svg><use href="#cut2"/></svg></span><span class="b"><svg><use href="#offs"/></svg></span><span class="b"><svg><use href="#rot"/></svg></span><span class="a a14 dim"></span>
      <span class="g g23"></span>
      <span class="b"><svg><use href="#crv"/></svg></span><span class="a a15 dim"></span><span class="b"><svg><use href="#crc"/></svg></span><span class="a a15 dim"></span><span class="b"><svg><use href="#ell"/></svg></span><span class="a a15 dim"></span><span class="b"><svg><use href="#rct"/></svg></span><span class="a a15 dim"></span><span class="b"><svg><use href="#pgn"/></svg></span><span class="a a15 dim"></span>
      <span class="g g16"></span>
      <span class="b"><svg><use href="#qgsa"/></svg></span><span class="b"><svg><use href="#glb1"/></svg></span><span class="b"><svg><use href="#glb2"/></svg></span><span class="b"><svg><use href="#glb3"/></svg></span>
      <span class="g g13"></span>
      <span class="b"><svg><use href="#chart"/></svg></span>
      <span class="g g15"></span>
      <span class="b"><svg><use href="#cam"/></svg></span><span class="b"><svg><use href="#pic"/></svg></span>
      <span class="g g14"></span>
      <span class="b"><svg><use href="#grn"/></svg></span>
      <span class="g g14"></span>
      <span class="b"><svg><use href="#d3"/></svg></span>
    </div>
  </section>

  <main class="work">
    <aside class="ldock">
      <div class="lpanel"></div>
      <div class="dtitle"><span>Browser</span><span class="dbtns"><svg><use href="#dtop"/></svg><svg><use href="#dx"/></svg></span></div>
      <div class="btools"><svg><use href="#b-new"/></svg><svg><use href="#b-ref"/></svg><svg><use href="#b-fil"/></svg><svg><use href="#b-col"/></svg><svg><use href="#b-inf"/></svg></div>
      <div class="btree">
        <div class="brow-list">
          <div class="brow"><i class="chev r"></i><svg><use href="#r-db"/></svg><span>dati_esempi.gpkg</span></div>
          <div class="brow"><i class="chev d"></i><svg><use href="#r-db"/></svg><span>dati_esempio.gpkg</span></div>
          <div class="brow sub on"><svg class="pt"><use href="#r-pts"/></svg><span>aeroporticertificati</span></div>
          <div class="brow sub"><svg class="pt"><use href="#r-pg"/></svg><span>regioni_g</span></div>
          <div class="brow"><i class="chev r"></i><svg><use href="#r-db"/></svg><span>dtm_632010.gpkg</span></div>
          <div class="brow"><i class="chev r"></i><svg><use href="#r-db"/></svg><span>Esercizio_14.gpkg</span></div>
          <div class="brow"><i class="chev r"></i><svg><use href="#r-db"/></svg><span>localita_istat_2011.gpkg</span></div>
          <div class="brow"><i class="chev r"></i><svg><use href="#r-db"/></svg><span>pacchetto.gpkg</span></div>
        </div>
        <div class="vbar"><i class="chev u"></i><i class="vthumb"></i><i class="chev d2"></i></div>
        <div class="hbar"><i class="chev l"></i><i class="hthumb"></i><i class="chev r2"></i></div>
      </div>
    </aside>

    <div class="canvas">
      <svg class="map" viewBox="336 121 1072 927" width="1072" height="927">
        <g class="rough">
        <g class="land">
          <path d="M515 325 525 322 538 313 540 305 533 293 525 277 535 268 542 272 552 268 562 267 568 263 577 268 587 257 590 243 600 235 607 231 608 242 620 255 627 257 625 265 632 270 635 276 637 267 633 263 643 250 648 228 655 227 659 240 670 238 680 238 687 246 690 245 686 233 685 223 693 218 697 222 704 223 702 213 705 203 717 202 732 207 738 194 753 192 770 190 783 184 790 183 787 193 795 203 802 212 817 213 833 217 864 220 864 225 850 237 862 245 858 253 863 257 863 267 872 275 878 283 870 285 865 273 847 277 835 283 817 297 800 308 798 320 805 329 1011 537 1015 547 1001 560 1005 572 1042 583 1070 595 1091 607 1119 615 1144 637 1152 652 1148 658 1146 675 1125 663 1115 645 1087 643 1074 632 1062 635 1050 662 1044 683 1046 695 1066 700 1082 712 1082 727 1070 743 1052 757 1056 783 1035 800 1033 817 1025 822 1003 820 1011 797 1019 778 1015 768 1033 760 1027 743 1021 720 1009 700 1003 680 997 672 982 677 974 672 954 660 956 653 944 632 923 637 907 618 901 610 891 593 878 595 864 591 852 597 846 590 825 580 805 567 789 545 780 537 700 440 579 423 560 423 556 412 543 393 526 370 526 337 514 323Z"/>
          <path d="M842 813 852 823 874 810 887 817 901 825 927 820 948 815 964 807 980 808 982 800 1001 797 984 830 982 863 989 873 993 888 982 900 984 913 964 910 946 903 927 888 911 887 874 867 860 858 842 855 829 847 821 833 831 820Z"/>
          <path d="M596 609 591 620 591 628 607 630 629 617 642 600 654 597 664 612 670 630 678 652 668 672 673 682 668 733 667 750 652 747 638 755 625 767 613 767 609 757 599 740 603 723 603 697 605 670 600 660 595 640 589 625Z"/>
          <ellipse cx="601" cy="757" rx="2" ry="6"/><ellipse cx="804" cy="913" rx="3" ry="4"/><ellipse cx="964" cy="787" rx="1.500" ry="4"/><ellipse cx="958" cy="780" rx="2" ry="2"/><ellipse cx="944" cy="780" rx="1.500" ry="1.500"/><ellipse cx="978" cy="762" rx="1.500" ry="2"/><ellipse cx="865" cy="774" rx="1.500" ry="1.500"/><ellipse cx="931" cy="782" rx="1" ry="1.500"/><ellipse cx="971" cy="773" rx="1.500" ry="1.500"/><ellipse cx="805" cy="829" rx="1.500" ry="2"/><ellipse cx="821" cy="832" rx="2" ry="2"/><ellipse cx="899" cy="629" rx="3" ry="2.500"/><ellipse cx="917" cy="641" rx="2" ry="1"/><ellipse cx="846" cy="618" rx="1" ry="2"/><ellipse cx="872" cy="627" rx="1.500" ry="1"/><ellipse cx="856" cy="977" rx="1.200" ry="1.500"/><ellipse cx="825" cy="1000" rx=".8" ry=".8"/>
        </g>
        <g class="borders">
          <path d="M577 268 582 287 572 295 558 292 547 297 538 300 533 293"/>
          <path d="M620 255 613 268 613 283 623 303 610 312 612 327"/>
          <path d="M704 223 713 233 707 267 710 277 727 275 733 285 748 265 765 258 778 248 772 230 783 213 802 212"/>
          <path d="M727 275 715 292 717 307 733 317 747 329"/>
          <path d="M813 215 797 240 805 252 803 262 815 273 828 269 837 283"/>
          <path d="M846 537 866 553 882 555 899 562 901 573 891 593"/>
          <path d="M899 562 911 547 923 553 935 537"/>
          <path d="M956 537 958 557 950 563 954 573 968 588 970 598 984 600"/>
          <path d="M901 573 905 580 929 582 954 573"/>
          <path d="M987 600 984 610 974 615 984 633 1003 655 997 672"/>
          <path d="M987 600 1001 593 1011 605 1021 608 1033 620 1048 617 1052 637 1060 640"/>
          <path d="M1003 675 1015 673 1019 680 1033 677 1038 662 1050 662"/>
        </g>
        </g>
        <g class="planes">
          <use href="#plane" x="552" y="281"/><use href="#plane" x="566" y="319"/><use href="#plane" x="620" y="290"/><use href="#plane" x="648" y="302"/><use href="#plane" x="669" y="287"/><use href="#plane" x="700" y="304"/><use href="#plane" x="728" y="305"/><use href="#plane" x="748" y="229"/><use href="#plane" x="792" y="284"/><use href="#plane" x="801" y="295"/><use href="#plane" x="855" y="268"/><use href="#plane" x="563" y="366"/><use href="#plane" x="805" y="557"/><use href="#plane" x="824" y="557"/><use href="#plane" x="982" y="574"/><use href="#plane" x="1050" y="590"/><use href="#plane" x="1117" y="617"/><use href="#plane" x="1088" y="629"/><use href="#plane" x="918" y="617"/><use href="#plane" x="953" y="633"/><use href="#plane" x="596" y="643"/><use href="#plane" x="662" y="625"/><use href="#plane" x="636" y="742"/><use href="#plane" x="1033" y="749"/><use href="#plane" x="1080" y="740"/><use href="#plane" x="1006" y="812"/><use href="#plane" x="863" y="812"/><use href="#plane" x="830" y="833"/><use href="#plane" x="975" y="857"/><use href="#plane" x="952" y="892"/><use href="#plane" x="843" y="1003"/>
        </g>
      </svg>
    </div>

    <aside class="rdock">
      <div class="dtitle big"><span>Stile layer</span><span class="dbtns"><svg><use href="#dtop"/></svg><svg><use href="#dx"/></svg></span></div>
      <div class="combo lay"><svg class="ci"><use href="#r-pts2"/></svg><span>aeroporticertificati</span><i class="tri"></i></div>
      <div class="rbody">
        <div class="rstrip">
          <div class="rs-top"><svg><use href="#brush"/></svg></div>
          <div class="rs-dark">
            <svg class="s-abc"><use href="#abc"/></svg>
            <svg><use href="#cube"/></svg>
            <svg><use href="#tree"/></svg>
            <svg><use href="#hist"/></svg>
          </div>
        </div>
        <div class="rmain">
          <div class="combo rend"><svg class="ci"><use href="#rr"/></svg><span>Single symbol</span><i class="tri"></i></div>
          <div class="symrow">
            <div class="symtree">
              <div class="st-row st-top"><i class="chev d"></i><span class="st-sel"><svg class="nv"><use href="#air"/></svg><b>Simbolo</b></span></div>
              <div class="st-row st-ch"><svg class="bk"><use href="#air"/></svg><span>SVG marker</span></div>
              <div class="st-row st-ch"><svg class="th" viewBox="0 0 16 16"><path d="M1 11 8 6l7 5" fill="none" stroke="#222" stroke-width="1.500"/></svg><span>SVG marker</span></div>
            </div>
            <div class="preview"><svg class="pv"><use href="#air"/></svg></div>
          </div>
          <div class="symbtns">
            <span class="sb en"><svg><use href="#plus"/></svg></span><span class="sb"><svg><use href="#minus"/></svg></span><span class="sb"><svg><use href="#lock"/></svg></span><span class="sb"><svg><use href="#dup"/></svg></span><span class="sb"><svg><use href="#tup"/></svg></span><span class="sb"><svg><use href="#tdn"/></svg></span>
          </div>
          <hr class="hr h8">
          <div class="frow fr-u"><label class="w47">Unità</label><div class="combo grow"><span>Millimetri</span><i class="tri"></i></div></div>
          <div class="frow fr-o"><label class="w47">Opacità</label><div class="slider"><i class="thumb"></i></div><div class="spin w100"><span>100,0 %</span><i class="sp"><i class="up"></i><i class="dn"></i></i></div></div>
          <div class="frow fr-c"><label class="w48">Colore</label><div class="colorbtn"><i class="swatch"></i><i class="tri"></i></div></div>
          <div class="frow fr-d"><label class="w82">Dimensione</label><div class="spin grow"><span>6,00000</span><i class="sp"><i class="up"></i><i class="dn"></i></i></div><svg class="dd"><use href="#ddef"/></svg></div>
          <div class="frow fr-r"><label class="w82">Rotazione</label><div class="spin grow"><span>0,00 °</span><i class="sp"><i class="up"></i><i class="dn"></i></i></div><svg class="dd"><use href="#ddef"/></svg></div>
          <hr class="hr h7">
          <div class="frow fr-s"><label class="w68">Simboli in</label><div class="combo white grow"><span>Tutti i simboli</span><i class="chev d3"></i></div><span class="btn w91">Apri libreria</span></div>
          <div class="symlist">
            <div class="symgrid">
              <div class="cell"><svg viewBox="0 0 20 20"><rect x="5" y="5" width="10" height="10" rx="1" fill="#2277b8" stroke="#333"/></svg><span>square</span></div>
              <div class="cell"><svg viewBox="-2 -2 24 24"><path d="M10 1l2.500 6.500H19l-5 4.300 2 6.700-6-4-6 4 2-6.700-5-4.300h6.500Z" fill="#e8171d" stroke="#333" stroke-width="1"/></svg><span>star</span></div>
              <div class="cell"><svg viewBox="0 0 28 28"><path d="M14 1l3.500 9H27l-7.500 6L22 26l-8-5.500L6 26l2.500-10L1 10h9.500Z" fill="#5c3a9e"/><circle cx="14" cy="14" r="4.500" fill="#f0e860"/></svg><span>star2</span></div>
              <div class="cell"><svg viewBox="0 0 20 20"><path d="M10 3v14M3 10h14M5 5l10 10M15 5 5 15" stroke="#777" stroke-width="1.200"/><circle cx="10" cy="10" r="1.500" fill="#222"/></svg><span>star3</span></div>
              <div class="cell sel"><svg class="nv" viewBox="-13 -13 26 26"><use href="#plane"/></svg><span class="o16">topo airp</span></div>
              <div class="cell"><svg viewBox="0 0 28 28"><rect x="1.500" y="1.500" width="25" height="25" rx="2" fill="#fff" stroke="#111" stroke-width="1.600"/><path d="M14 6 21 22H7Z" fill="#111"/><path d="M14 13l3 9h-6Z" fill="#fff"/></svg><span class="o3">topo camp</span></div>
              <div class="cell"><svg viewBox="0 0 28 28"><circle cx="14" cy="14" r="12" fill="#fff" stroke="#e11c24" stroke-width="2"/><path d="M14 6.500v15M6.500 14h15" stroke="#e11c24" stroke-width="3.500"/></svg><span class="o12">topo hosp</span></div>
              <div class="cell"><svg viewBox="-3 -3 26 26"><circle cx="10" cy="10" r="7" fill="#fff" stroke="#222" stroke-width="1.200"/><circle cx="10" cy="10" r="2.300" fill="#222"/></svg><span class="o8">topo pop c</span></div>
              <div class="cell"><svg viewBox="0 0 20 20"><circle cx="10" cy="10" r="5.500" fill="#fff" stroke="#222"/></svg><span class="o8">topo pop c</span></div>
              <div class="cell"><svg viewBox="0 0 20 20"><rect x="7.500" y="7.500" width="5" height="5" fill="#111"/></svg><span class="o8">topo pop h</span></div>
              <div class="cell"><svg viewBox="0 0 20 20"><path d="M10 6l5 9H5Z" fill="#111"/></svg><span class="o8">topo pop v</span></div>
              <div class="cell"><svg viewBox="0 0 20 20"><path d="M10 3l7 14H3Z" fill="#f28b8b" stroke="#8a6a6a"/></svg><span>triangle</span></div>
              <div class="cell"><svg viewBox="0 0 28 28"><path d="M14 4 24 23H4Z" fill="#3d74b4" stroke="#2a5a90"/></svg><span class="o14">triangle bl</span></div>
              <div class="cell"><svg viewBox="0 0 28 28"><path d="M14 4 24 23H4Z" fill="#45a53f" stroke="#2f8a2a"/></svg><span class="o14 nar">triangle gr</span></div>
              <div class="cell"><svg viewBox="0 0 28 28"><path d="M14 4 24 23H4Z" fill="#e11c28" stroke="#a01420"/></svg><span class="o14">triangle re</span></div>
              <div class="cell"><svg class="t2" viewBox="0 0 20 20"><path d="M5 1 15 10 5 19Z" fill="#f08a10" stroke="#222" stroke-width=".8"/></svg><span>triangle2</span></div>
            </div>
            <div class="lscroll"><i class="chev u"></i><i class="lthumb"></i><i class="chev d2"></i></div>
          </div>
          <div class="frow fr-t"><label class="grow tlbl">topo airport</label><span class="btn w91">Salva simbolo</span><span class="btn w91 avz">Avanzato<i class="tri"></i></span></div>
          <div class="viz"><i class="tr-r"></i><b>Visualizzazione del layer</b><i class="vline"></i></div>
          <div class="frow fr-b"><span class="sq"><svg><use href="#s-undo"/></svg></span><span class="sq"><svg><use href="#s-redo"/></svg></span><span class="chk big-gap"></span><span class="aut">Aggiornamento immediato</span><span class="btn w91 app-b">Applica</span></div>
        </div>
      </div>
    </aside>
  </main>

  <footer class="status">
    <div class="locator"><svg><use href="#srch"/></svg><span>Digita per localizzare (Ctrl+K)</span></div>
    <span class="msg w607">Non ci sono geometrie in questa posizione.</span>
    <span class="w71">Coordinata</span><span class="sbox w112 ctr">55239,4820385</span><span class="sic w36"><svg><use href="#nocrs"/></svg></span>
    <span class="w34">Scala</span><span class="sbox w97">1:7.405.391<i class="chev d3"></i></span><span class="sic w37"><svg><use href="#padl"/></svg></span>
    <span class="w144">Lente d'ingrandimento</span><span class="sbox w86">100%<i class="sp"><i class="up"></i><i class="dn"></i></i></span>
    <span class="w71 ml10">Rotazione</span><span class="sbox w84">0,0 °<i class="sp"><i class="up"></i><i class="dn"></i></i></span>
    <span class="chk ml6"></span><span class="w68 ml7">Visualizza</span><span class="sic w33"><svg><use href="#crs"/></svg></span><span class="w85">EPSG:32632</span><span class="sic w28"><svg><use href="#msg"/></svg></span>
  </footer>
  <div class="strip"></div>

  <div class="pmenu">
    <div class="mi"><svg><use href="#m-new"/></svg><span>Nuovo</span><span>Ctrl+N</span></div>
    <div class="mi"><svg><use href="#m-open"/></svg><span>Apri...</span><span>Ctrl+O</span></div>
    <div class="mi sub"><i></i><span>Nuovo da modello</span><span></span></div>
    <div class="mi sub"><i></i><span>Apri recenti</span><span></span></div>
    <div class="ms"></div>
    <div class="mi"><svg><use href="#m-save"/></svg><span>Salva</span><span>Ctrl+S</span></div>
    <div class="mi"><svg><use href="#m-saveas"/></svg><span>Salva Come...</span><span>Ctrl+Shift+S</span></div>
    <div class="mi"><svg><use href="#m-img"/></svg><span>Salva Mappa come Immagine</span><span></span></div>
    <div class="mi"><svg><use href="#m-pdf"/></svg><span>Salva Mappa come PDF</span><span></span></div>
    <div class="mi"><i></i><span>Esporta DXF...</span><span></span></div>
    <div class="mi"><i></i><span>Importa DWG/DXF...</span><span></span></div>
    <div class="ms"></div>
    <div class="mi"><i></i><span>Opzioni di aggancio...</span><span></span></div>
    <div class="ms"></div>
    <div class="mi"><i></i><span>Proprietà progetto...</span><span>Ctrl+Shift+P</span></div>
    <div class="ms"></div>
    <div class="mi hi"><svg><use href="#m-lay"/></svg><span>Nuovo Modello di stampa</span><span>Ctrl+P</span></div>
    <div class="mi"><svg><use href="#m-rep"/></svg><span>New Report</span><span></span></div>
    <div class="mi"><svg><use href="#m-mgr"/></svg><span>Layout Manager...</span><span></span></div>
    <div class="mi sub"><i></i><span>Modelli</span><span></span></div>
    <div class="ms"></div>
    <div class="mi"><i></i><span>Esci da QGIS</span><span>Ctrl+Q</span></div>
    <div class="redbox"></div>
  </div>

  <svg class="callout" viewBox="0 0 1920 1080" width="1920" height="1080"><path d="M335 374 580 331M335 478 580 534" stroke="#ed1c24" stroke-width="2" fill="none"/></svg>

  <div class="inset">
    <div class="in-sep"></div>
    <div class="in-row"><svg><use href="#m-lay"/></svg><span>Nuovo Modello di stampa</span><span class="in-k">Ctrl+P</span></div>
    <div class="in-row"><svg><use href="#m-rep"/></svg><span>New Report</span></div>
    <div class="in-row"><svg><use href="#m-mgr"/></svg><span>Layout Manager...</span></div>
    <div class="in-row"><i class="in-ic"></i><span>Modelli</span><i class="in-ar"></i></div>
    <div class="in-sep"></div>
  </div>
</div>
</body>
</html>
```
FILE: styles.css
```css
* { box-sizing: border-box; }
html, body { margin: 0; padding: 0; }
body { font: 12.8px/1.2 "Noto Sans", Roboto, sans-serif; color: #000; background: #f0f0f0; overflow: hidden; }
.defs { position: absolute; }
.it { font: 700 7px Roboto, sans-serif; text-anchor: middle; }
.ii { font: 700 14px "Liberation Serif", serif; text-anchor: middle; }
.iT { font: 14px "Liberation Serif", serif; text-anchor: middle; }
.iq { font: 700 12px Roboto, sans-serif; text-anchor: middle; }
.ix { font: 700 8px Roboto, sans-serif; text-anchor: middle; }
.ia { font: 700 8px Roboto, sans-serif; text-anchor: middle; }
.ib { font: 700 7px Roboto, sans-serif; text-anchor: middle; }
svg { display: block; flex: none; overflow: visible; }
i { font-style: normal; display: block; }

.app { position: relative; width: 1920px; height: 1080px; display: flex; flex-direction: column; overflow: hidden; }

/* title bar */
.titlebar { height: 29px; background: #fff; display: flex; align-items: center; padding-left: 2px; flex: none; }
.ti-logo { width: 24px; height: 24px; }
.ti-name { font-size: 14px; margin-left: 3px; color: #222; }
.ti-win { margin-left: auto; display: flex; padding-right: 26px; gap: 46px; }
.wb { width: 12px; height: 12px; }

/* menu bar */
.menubar { height: 23px; background: #fff; display: flex; align-items: stretch; flex: none; }
.mb { padding: 1px 8.7px 0; display: flex; align-items: center; }
.mb.on { background: #cce8ff; outline: 1px solid #99d1ff; outline-offset: -1px; }

/* toolbars */
.tools { height: 69px; flex: none; background: #f0f0f0; border-top: 1px solid #e3e3e3; }
.trow { display: flex; align-items: center; padding-left: 335px; }
.r1 { height: 34px; border-bottom: 1px solid #dcdcdc; }
.r2 { height: 33px; }
.b { width: 31px; height: 100%; display: flex; align-items: center; justify-content: center; flex: none; }
.b svg { width: 24px; height: 24px; }
.bw { width: 31.5px; }
.b26 { width: 26px; }
.bs4 { margin-left: 4px; }
.a { height: 100%; display: flex; align-items: center; justify-content: center; flex: none; }
.a::before { content: ""; border-left: 5px solid transparent; border-right: 5px solid transparent; border-top: 5px solid #111; }
.a.dim::before { border-top-color: #777; }
.a14 { width: 14px; } .a15 { width: 15px; } .a16 { width: 16px; } .a18 { width: 18px; }
.g { height: 100%; flex: none; position: relative; }
.g::before { content: ""; position: absolute; right: 4px; top: 5px; bottom: 5px; width: 2px; background: repeating-linear-gradient(#aaa 0 2px, transparent 2px 4px); }
.g::after { content: ""; position: absolute; left: 2px; top: 0; bottom: 0; width: 1px; background: #dcdcdc; }
.g13 { width: 13px; } .g14 { width: 14px; } .g15 { width: 15px; } .g16 { width: 16px; } .g22 { width: 22px; } .g23 { width: 23px; } .g25 { width: 25px; }
.tinput { width: 98px; height: 22px; border: 1px solid #d0d0d0; display: flex; align-items: center; justify-content: space-between; padding: 0 2px; color: #666; flex: none; font-size: 13.4px; }
.tsel { height: 24px; background: #cacaca; border: 1px solid #c0c0c0; color: #777; display: flex; align-items: center; padding-left: 3px; position: relative; flex: none; font-size: 13.6px; white-space: nowrap; }
.w63 { width: 63px; } .w210 { width: 210px; }
.mini { position: absolute; right: 7px; top: 9px; border-left: 4px solid transparent; border-right: 4px solid transparent; border-top: 5px solid #888; }
.sp { width: 14px; height: 100%; display: flex; flex-direction: column; align-items: center; justify-content: center; gap: 3px; flex: none; background: #f4f4f4; margin-left: auto; }
.up { border-left: 4px solid transparent; border-right: 4px solid transparent; border-bottom: 5px solid #222; }
.dn { border-left: 4px solid transparent; border-right: 4px solid transparent; border-top: 5px solid #222; }

/* main */
.work { height: 927px; display: flex; flex: none; }
.ldock { width: 336px; padding: 0 5px 1px 35px; display: flex; flex-direction: column; flex: none; }
.lpanel { flex: 1; background: #fff; border: 1px solid #888; }
.dtitle { height: 24px; margin-top: 8px; background: #d9d9d9; border: 1px solid #b4b4b4; display: flex; align-items: center; justify-content: space-between; padding-left: 4px; flex: none; font-size: 13px; }
.dtitle.big { height: 25px; margin: 1px 0 0; }
.dbtns { display: flex; gap: 7px; padding-right: 2px; align-items: center; }
.dbtns svg { width: 10px; height: 10px; }
.btools { height: 29px; display: flex; align-items: center; gap: 7px; padding-left: 5px; flex: none; }
.btools svg { width: 16px; height: 16px; }
.btree { height: 201px; background: #fff; border: 1px solid #888; position: relative; overflow: hidden; flex: none; font-size: 13.3px; }
.brow-list { height: 181px; overflow: hidden; width: 274px; }
.brow { height: 24px; display: flex; align-items: center; position: relative; padding-left: 56px; }
.brow svg { width: 15px; height: 17px; position: absolute; left: 56px; top: 4px; }
.brow span { position: absolute; left: 79px; top: 4px; }
.brow.sub span { left: 104px; }
.brow.sub svg.pt { left: 79px; width: 18px; height: 16px; top: 3px; }
.brow.on::before { content: ""; position: absolute; left: 75px; right: 0; top: 0; bottom: 0; background: #d9d9d9; }
.brow .chev { position: absolute; left: 33px; top: 8px; }
.chev { width: 7px; height: 7px; border-right: 1.500px solid #777; border-bottom: 1.500px solid #777; }
.chev.r { transform: rotate(-45deg); }
.chev.d { transform: rotate(45deg); border-color: #333; }
.chev.u { transform: rotate(-135deg); border-color: #333; }
.chev.d2 { transform: rotate(45deg); border-color: #333; }
.chev.l { transform: rotate(135deg); border-color: #333; }
.chev.r2 { transform: rotate(-45deg); border-color: #333; }
.chev.d3 { transform: rotate(45deg); border-color: #666; border-width: 0 1px 1px 0; margin-left: auto; margin-right: 4px; flex: none; }
.vbar { position: absolute; right: 0; top: 0; width: 20px; bottom: 19px; background: #fff; }
.vbar .chev { position: absolute; left: 6px; }
.vbar .u { top: 9px; }
.vbar .d2 { bottom: 10px; }
.vthumb { position: absolute; left: 0; top: 78px; width: 19px; height: 24px; background: #cdcdcd; }
.hbar { position: absolute; left: 0; right: 0; bottom: 0; height: 19px; background: #f0f0f0; }
.hbar .chev { position: absolute; top: 6px; }
.hbar .l { left: 8px; }
.hbar .r2 { right: 29px; }
.hthumb { position: absolute; left: 21px; width: 126px; top: 0; bottom: 0; background: #cdcdcd; }

.canvas { width: 1072px; flex: none; background: #fff; border: 1px solid #888; overflow: hidden; }
.map { margin: -1px; }
.rough { filter: url(#rough); }
.land path, .land ellipse { fill: #80ae8c; stroke: #2a2a2a; stroke-width: 1.100; stroke-linejoin: round; }
.borders path { fill: none; stroke: #2a2a2a; stroke-width: 1; }
.planes use { fill: #000; stroke: #fff; stroke-width: 1.400; paint-order: stroke; }

.rdock { width: 512px; padding-left: 5px; flex: none; display: flex; flex-direction: column; font-size: 13.4px; }
.combo { height: 24px; background: #e1e1e1; border: 1px solid #adadad; display: flex; align-items: center; padding-left: 4px; position: relative; flex: none; }
.combo.white { background: #fff; border-color: #7a7a7a; }
.combo .ci { width: 15px; height: 15px; margin-right: 8px; }
.tri { position: absolute; right: 6px; top: 50%; margin-top: -2px; border-left: 4px solid transparent; border-right: 4px solid transparent; border-top: 5px solid #111; }
.lay { margin: 6px 2px 0 3px; padding-left: 5px; }
.lay .ci { margin-right: 7px; }
.rbody { display: flex; margin: 9px 0 0 3px; flex: 1; min-height: 0; }
.rstrip { width: 38px; margin-right: 3px; display: flex; flex-direction: column; height: 860px; flex: none; }
.rs-top { height: 41px; display: flex; justify-content: center; align-items: flex-end; padding-bottom: 7px; }
.rs-top svg { width: 30px; height: 30px; }
.rs-dark { flex: 1; background: #5d5d5d; display: flex; flex-direction: column; align-items: center; padding-top: 7px; gap: 12px; }
.rs-dark svg { width: 30px; height: 30px; }
.rs-dark svg.s-abc { width: 30px; height: 28px; }
.rmain { width: 460px; flex: none; display: flex; flex-direction: column; }
.rend { height: 25px; padding-left: 8px; }
.rend .ci { width: 17px; height: 17px; margin-right: 2px; }
.symrow { display: flex; margin-top: 7px; height: 99px; flex: none; }
.symtree { width: 256px; border: 1px solid #7a7a7a; background: #fff; flex: none; font-size: 13px; }
.st-row { height: 22px; position: relative; display: flex; align-items: center; }
.st-top { align-items: stretch; }
.st-top .chev { position: absolute; left: 9px; top: 6px; }
.st-sel { margin-left: 25px; flex: 1; background: #d9d9d9; display: flex; align-items: center; padding-left: 3px; gap: 5px; font-size: 12.5px; }
.st-sel svg, .bk, .th { width: 18px; height: 18px; }
.nv { fill: #1a3a60; }
.bk { fill: #000; }
.st-ch { padding-left: 52px; gap: 5px; }
.preview { flex: 1; position: relative; background: linear-gradient(#aaa, #aaa) 106px 0/1px 100% no-repeat, linear-gradient(#aaa, #aaa) 55px 50%/100px 1px no-repeat; }
.pv { position: absolute; left: 95px; top: 40px; width: 24px; height: 24px; fill: #000; stroke: #fff; stroke-width: 1; paint-order: stroke; }
.symbtns { margin-top: 9px; height: 27px; display: flex; gap: 8px; padding-left: 1px; flex: none; }
.sb { width: 31px; height: 27px; background: #d5d5d5; border: 1px solid #c6c6c6; display: flex; align-items: center; justify-content: center; }
.sb.en { background: #e6e6e6; border-color: #adadad; }
.sb svg { width: 18px; height: 18px; }
.hr { border: 0; height: 1px; background: #a0a0a0; flex: none; margin: 0; width: 460px; }
.h8 { margin-top: 8px; }
.h7 { margin-top: 7px; }
.frow { display: flex; align-items: center; flex: none; white-space: nowrap; }
.grow { flex: 1; min-width: 0; }
.fr-u { margin-top: 9px; height: 24px; }
.fr-o { margin-top: 1px; height: 20px; }
.fr-c { margin-top: 3px; height: 23px; }
.fr-d { margin-top: 9px; height: 22px; }
.fr-r { margin-top: 13px; height: 22px; }
.fr-s { margin-top: 7px; height: 25px; }
.fr-t { margin-top: 9px; height: 25px; gap: 9px; }
.fr-b { margin-top: 13px; height: 26px; }
.tlbl { font-size: 12.6px; }
.w47 { width: 47px; flex: none; } .w48 { width: 48px; flex: none; } .w82 { width: 82px; flex: none; } .w68 { width: 68px; flex: none; }
.w100 { width: 100px; flex: none; } .w91 { width: 91px; flex: none; }
.slider { width: 309px; height: 20px; margin-right: 4px; position: relative; flex: none; background: linear-gradient(#dfe5e0, #dfe5e0) 0 50%/100% 3px no-repeat; }
.thumb { position: absolute; right: 0; top: -1px; width: 12px; height: 21px; background: #0078d7; }
.spin { height: 100%; border: 1px solid #7a7a7a; background: #fff; display: flex; align-items: center; padding-left: 2px; }
.colorbtn { width: 411px; height: 23px; background: #e1e1e1; border: 1px solid #adadad; padding: 1px 0 1px 3px; position: relative; }
.swatch { width: 388px; height: 19px; background: #000; border-radius: 2px; }
.fr-d .spin, .fr-r .spin { flex: 0 0 339px; }
.dd { width: 24px; height: 22px; margin-left: 10px; }
.fr-s .combo { height: 23px; margin-right: 7px; }
.btn { height: 25px; background: #e1e1e1; border: 1px solid #adadad; display: flex; align-items: center; justify-content: center; position: relative; flex: none; }
.symlist { margin-top: 6px; height: 391px; border: 1px solid #7a7a7a; background: #fff; position: relative; overflow: hidden; flex: none; }
.symgrid { display: grid; grid-template-columns: repeat(4, 81px); grid-auto-rows: 96px; column-gap: 7px; row-gap: 5px; margin: -15px 0 0 7px; }
.cell { display: flex; flex-direction: column; align-items: center; overflow: hidden; padding-top: 23px; }
.cell svg { width: 26px; height: 26px; fill: #000; }
.cell svg.t2 { transform: translateX(-4px); }
.cell span { margin-top: 28px; white-space: nowrap; width: 81px; text-align: center; height: 19px; font-size: 14px; }
.cell.sel { background: #cce8ff; }
.cell span.o16, .cell span.o3, .cell span.o12, .cell span.o8, .cell span.o14 { text-align: left; }
.o16 { padding-left: 16px; } .o3 { padding-left: 3px; } .o12 { padding-left: 12px; } .o8 { padding-left: 8px; } .o14 { padding-left: 14px; }
.cell span.nar { letter-spacing: -.2px; padding-left: 13px; }
.lscroll { position: absolute; right: 1px; top: 0; bottom: 0; width: 20px; background: #f0f0f0; }
.lscroll .chev { position: absolute; left: 6px; }
.lscroll .u { top: 10px; }
.lscroll .d2 { bottom: 11px; }
.lthumb { position: absolute; left: 0; width: 19px; top: 249px; height: 120px; background: #cdcdcd; }
.avz { justify-content: flex-start; padding-left: 8px; }
.viz { margin-top: 10px; height: 18px; display: flex; align-items: center; color: #444; flex: none; font-size: 12.5px; }
.tr-r { margin-left: 5px; border-top: 5px solid transparent; border-bottom: 5px solid transparent; border-left: 7px solid #333; margin-right: 9px; }
.viz b { font-weight: 700; white-space: nowrap; }
.vline { flex: 1; height: 1px; background: #a0a0a0; margin-left: 7px; }
.sq { width: 25px; height: 24px; background: #e1e1e1; border: 1px solid #adadad; margin: 0 0 0 1px; display: flex; align-items: center; justify-content: center; }
.sq + .sq { margin-left: 8px; }
.sq svg { width: 17px; height: 17px; }
.chk { width: 16px; height: 16px; border: 1px solid #333; background: #fff; display: block; position: relative; flex: none; }
.chk::after { content: ""; position: absolute; left: 5px; top: 1px; width: 5px; height: 10px; border-right: 1px solid #222; border-bottom: 1px solid #222; transform: rotate(40deg); }
.big-gap { margin-left: 108px; }
.aut { margin-left: 6px; width: 179px; white-space: nowrap; font-size: 13px; }
.app-b { height: 26px; }

/* status bar */
.status { height: 30px; display: flex; align-items: center; padding: 3px 0 0 4px; flex: none; background: #f0f0f0; }
.status > span { flex: none; white-space: nowrap; }
.locator { width: 274px; height: 24px; border: 1px solid #777; background: #fff; display: flex; align-items: center; padding-left: 8px; gap: 6px; color: #777; flex: none; font-size: 13px; white-space: nowrap; }
.locator svg { width: 14px; height: 14px; }
.msg { margin-left: 10px; font-size: 13.1px; }
.w607 { width: 607px; } .w71 { width: 71px; } .w112 { width: 112px; } .w36 { width: 36px; } .w34 { width: 34px; }
.w97 { width: 97px; } .w37 { width: 37px; } .w144 { width: 144px; } .w86 { width: 86px; } .w84 { width: 84px; }
.w33 { width: 33px; } .w85 { width: 85px; } .w28 { width: 28px; }
.status .ml10 { margin-left: 10px; } .status .ml6 { margin-left: 6px; } .status .ml7 { margin-left: 7px; }
.sbox { height: 24px; background: #fff; border: 1px solid #777; display: flex; align-items: center; padding-left: 3px; }
.sbox.ctr { justify-content: center; padding: 0; }
.sic { display: flex; justify-content: center; }
.sic svg { width: 18px; height: 22px; }
.strip { height: 2px; background: #222; flex: none; }

/* project menu */
.pmenu { position: absolute; left: 0; top: 52px; width: 331px; height: 459px; background: #f0f0f0; border: 1px solid #c4c4c4; border-top-color: #aaa; padding: 2px 3px 0 2px; box-shadow: 2px 3px 4px rgba(0,0,0,.4); }
.mi { height: 24px; display: grid; grid-template-columns: 34px 203px 1fr; align-items: center; position: relative; padding-top: 1px; }
.mi svg { width: 22px; height: 22px; margin-left: 3px; }
.mi.hi { background: #90c8f6; }
.mi.sub::after { content: ""; position: absolute; left: 310px; top: 8px; border-top: 4px solid transparent; border-bottom: 4px solid transparent; border-left: 5px solid #111; }
.ms { height: 9px; position: relative; }
.ms::after { content: ""; position: absolute; left: 31px; right: 0; top: 4px; height: 1px; background: #d4d4d4; }
.redbox { position: absolute; left: 0; top: 321px; width: 333px; height: 105px; border: 2px solid #ed1c24; }

.callout { position: absolute; left: 0; top: 0; pointer-events: none; }

.inset { position: absolute; left: 580px; top: 330px; width: 572px; height: 205px; background: #efefef; border: 2px solid #ed1c24; font-size: 22.6px; padding: 6px 3px 0 57px; }
.in-sep { height: 2px; background: #d4d4d4; }
.in-row { height: 42px; display: flex; align-items: center; position: relative; }
.in-row:nth-child(2) { margin-top: 7px; }
.in-row:nth-child(5) { margin-bottom: 7px; }
.in-row svg { width: 38px; height: 38px; position: absolute; left: -50px; top: 2px; }
.in-k { position: absolute; left: 359px; }
.in-ar { position: absolute; left: 486px; top: 15px; border-top: 6px solid transparent; border-bottom: 6px solid transparent; border-left: 7px solid #111; }
.in-row span { margin-left: 6px; white-space: nowrap; }
.in-row .in-k { margin-left: 0; }
```
